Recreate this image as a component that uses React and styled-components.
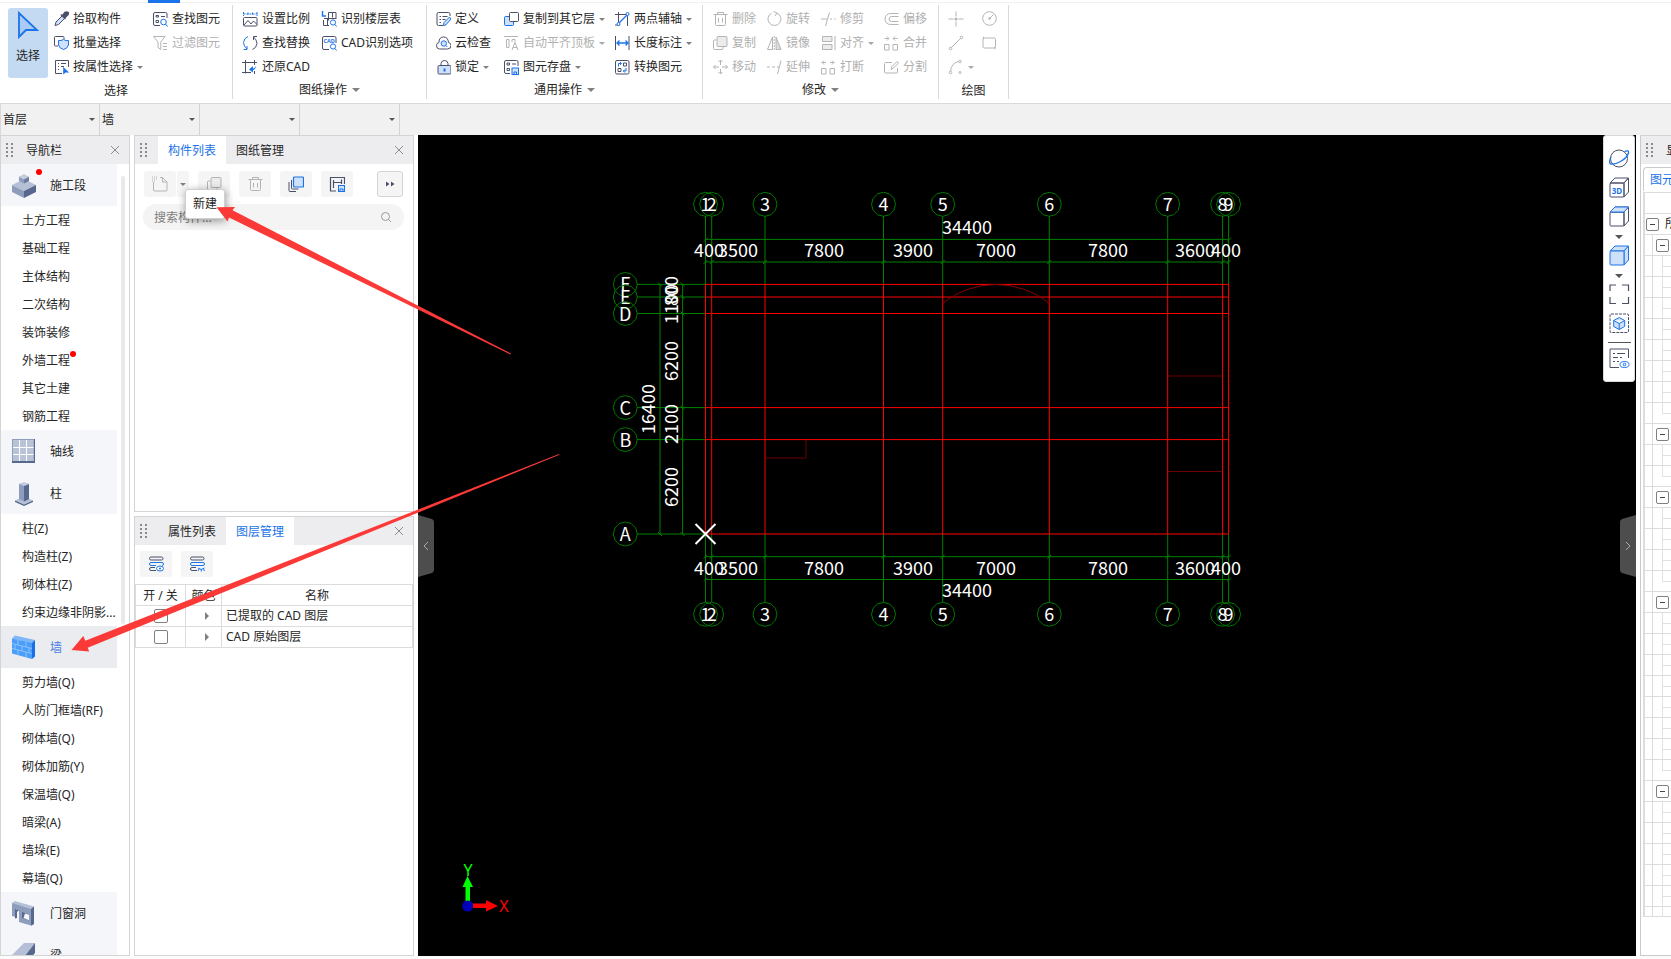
import React from "react";
import styled, { createGlobalStyle, css } from "styled-components";

const ink = "#4a5068";
const blue = "#1a73e8";
const pale = "#cfe1fa";
const grey = "#b4b4b4";

const GlobalStyle = createGlobalStyle`
  * {
    box-sizing: border-box;
  }
  body {
    margin: 0;
    overflow: hidden;
    background: #fbfbfb;
    color: #262626;
    font-family: "Noto Sans", "Noto Sans CJK SC", sans-serif;
    font-size: 12px;
    line-height: 18px;
  }
  button, input, select {
    font: inherit;
    color: inherit;
  }
  svg {
    display: block;
    flex: none;
  }
`;

/* ---------- icons ---------- */

const icons = {
  picker: (
    <>
      <path d="M9 5 3 11l-1 3.5L5.500 13.500 11 8" fill={pale} stroke={ink} />
      <path d="M8 3.500 12.500 8 M9.500 5l2.500-3.500q2-1 3 0 .8 1.500-.5 2.500L11.500 7z" fill={ink} stroke={ink} strokeWidth="1.600" />
    </>
  ),
  batch: (
    <>
      <path d="M5 11H2.500Q1.500 11 1.500 10V2.500Q1.500 1.500 2.500 1.500H10Q11 1.500 11 2.500V4" stroke={ink} />
      <path d="M5.500 5.500q2.500.5 5-1 2.500 1.500 5 1V10q-1 3.500-5 4.500-4-1-5-4.500z" fill={pale} stroke={blue} />
    </>
  ),
  byProp: (
    <>
      <path d="M9 14.500H2.500V1.500h13V8M5 4.500h1M8 4.500h5M5 7.500h1M8 7.500h3M5 10.500h1" stroke={ink} />
      <path d="M10.500 8.500v6.500l2-1.800h3z" fill={blue} stroke={blue} strokeWidth=".6" />
    </>
  ),
  find: (
    <>
      <path d="M8 14.500H3Q1.500 14.500 1.500 13V3Q1.500 1.500 3 1.500H13.500Q15 1.500 15 3V7M4 4.500h2.500v1.500H4zM9 5.500h4M4 9.500h2.500v2H4z" stroke={ink} />
      <circle cx="11.500" cy="11" r="2.800" stroke={blue} />
      <path d="M13.500 13l2 2.500" stroke={blue} />
    </>
  ),
  filter: (
    <path d="M1.500 1.500H13L8.800 7v7.500L6 12.500V7zM11 8.500h4M11 11.500h4M11 14.500h4" stroke={grey} />
  ),
  scale: (
    <>
      <path d="M1.500 1v4M15 1v4M1.500 3h14M6 1.500V4M10.500 1.500V4" stroke={blue} strokeDasharray="2 1" />
      <rect x="1.500" y="6.500" width="13.500" height="8.500" rx="1" stroke={ink} />
      <path d="M2 14l4-4.500 3 3.500 2.500-3L15 13.500" stroke={ink} />
    </>
  ),
  replace: (
    <>
      <path d="M6 1.500Q2 3 1.500 7.500q.3 4 3.500 6.500M5 11v3.500H1.500" stroke={blue} />
      <path d="M10.500 14.500Q14.500 13 15 8.500q-.3-4-3.500-6.500M11.500 5V1.500H15" stroke={ink} />
    </>
  ),
  restore: (
    <>
      <path d="M0 3.500h15M3.500 1v13.500M0 13.500h9M12.500 1v5M12.500 12v3" stroke={ink} />
      <path d="M14 6.500q-1 3-3 3V7L7 10.500l4 3v-2.500q3-.5 3-4.500z" fill={blue} />
    </>
  ),
  floors: (
    <>
      <path d="M1.500 0v5H5" stroke={blue} strokeWidth="1.400" />
      <path d="M7.500 1.500H15V8M7.500 1.500v8M11.500 1.500v5M3 7.500h12M2.500 9v5.500H8M6.500 8v6" stroke={ink} />
      <circle cx="12" cy="11.500" r="2.600" stroke={blue} />
      <path d="M14 13.500l1.500 2" stroke={blue} />
    </>
  ),
  cad: (
    <>
      <path d="M8 14.500H3Q1.500 14.500 1.500 13V3Q1.500 1.500 3 1.500H13.500Q15 1.500 15 3V8" stroke={ink} />
      <text x="8.200" y="7.800" textAnchor="middle" fontSize="5.500" fontWeight="700" fill={blue}>CAD</text>
      <circle cx="12" cy="11.500" r="2.600" stroke={blue} />
      <path d="M14 13.500l1.500 2" stroke={blue} />
    </>
  ),
  define: (
    <>
      <path d="M8 14.500H3.500Q2 14.500 2 13V3Q2 1.500 3.500 1.500H13.500Q15 1.500 15 3V5M4.500 5.500h1.500M7.500 5.500h5M4.500 8.500h1.500M7.500 8.500h3M4.500 11.500h1.500" stroke={ink} />
      <path d="M8.500 14.500l.5-3L14.500 6l1.500 2-5 5.800z" fill={pale} stroke={blue} />
    </>
  ),
  cloud: (
    <>
      <path d="M4.500 14Q1.500 14 1.500 10.500q0-2.500 2.500-3Q4 2 8.500 2t5 5.500q2.500.5 2.500 3 0 3.500-3.500 3.500z" stroke={ink} />
      <circle cx="8.800" cy="8.500" r="2.700" fill={pale} stroke={blue} />
      <path d="M10.800 10.500l1.500 1.500" stroke={blue} />
    </>
  ),
  lock: (
    <>
      <path d="M6 6V4.500q.5-3 3.500-3t3.500 3V6" stroke={ink} />
      <rect x="3" y="6.500" width="13" height="8.500" rx="1.200" fill={pale} stroke={ink} />
      <path d="M9.500 9.500v3" stroke={blue} strokeWidth="2" />
    </>
  ),
  copyFloor: (
    <>
      <path d="M6 5.500H2.500Q1.500 5.500 1.500 6.500V13.500Q1.500 14.500 2.500 14.500H9.500Q10.500 14.500 10.500 13.500V11" fill={pale} stroke={blue} />
      <rect x="6.500" y="1.500" width="9" height="9" rx="1" fill="#fff" stroke={ink} />
    </>
  ),
  alignTop: (
    <>
      <path d="M1 1.500h14M3.500 4.500h2.500v8H3.500zM9 7V4.500h3V7" stroke={grey} />
      <path d="M9 15l3-7.500 3 7.500M10 12.500h4" stroke={grey} />
    </>
  ),
  store: (
    <>
      <path d="M7 14.500H3Q1.500 14.500 1.500 13V3Q1.500 1.500 3 1.500H13.500Q15 1.500 15 3V7M4 4h2.500v2H4zM9 5h4M4 9.500h2.500v2H4z" stroke={ink} />
      <rect x="9" y="9" width="6.500" height="6.500" fill={pale} stroke={blue} />
      <path d="M11 15v-2h2.500v2" stroke={blue} />
    </>
  ),
  twoPoint: (
    <>
      <path d="M1 3.500h13.500M4.500 1v14M13.500 3v12M1 14h5" stroke={ink} />
      <path d="M4 13L14 3" stroke={blue} strokeWidth="1.300" />
      <circle cx="4.500" cy="13" r="1.500" fill="#fff" stroke={blue} />
      <circle cx="13.500" cy="3" r="1.500" fill="#fff" stroke={blue} />
    </>
  ),
  length: (
    <>
      <path d="M1.500 1v14M15 1v14" stroke={ink} />
      <path d="M3 8h11M5.500 5.500L3 8l2.500 2.500M11.500 5.500L14 8l-2.500 2.500" stroke={blue} strokeWidth="1.300" />
    </>
  ),
  convert: (
    <>
      <rect x="1.500" y="1.500" width="13.500" height="13.500" rx="1.500" stroke={ink} />
      <path d="M9.500 4h3v3h-3zM4 9.500h3v3H4z" stroke={ink} />
      <path d="M4.500 7.500V4.500H7M6 3L7.500 4.500 6 6M12 9v3H9.500M10.800 10.500L9.300 12l1.500 1.500" stroke={blue} />
    </>
  ),
  trash: <path d="M1.500 3.500h14M5.500 3V1.500h6V3M3.500 4v9.500q0 1 1 1h8q1 0 1-1V4M6.500 7v4.500M10.500 7v4.500" stroke={grey} />,
  copy: (
    <>
      <path d="M4.500 5H2.500Q1.500 5 1.500 6V13.500Q1.500 14.500 2.500 14.500H10Q11 14.500 11 13.500V12" stroke={grey} />
      <rect x="5" y="1.500" width="10" height="10" rx="1" fill="#ececec" stroke={grey} />
    </>
  ),
  move: <path d="M8.500 1v5M8.500 10v5M1.500 8H7M10 8h5.500M6.500 3l2-2 2 2M6.500 13l2 2 2-2M3.500 6l-2 2 2 2M13.500 6l2 2-2 2" stroke={grey} />,
  rotate: <path d="M5.500 2.200A6.500 6.500 0 1 0 11 2M7.500.5L11 2 9 5" stroke={grey} />,
  mirror: (
    <>
      <path d="M6.500 2v12.500H1.500z" stroke={grey} />
      <path d="M10 2v12.500h5z" fill="#ddd" stroke={grey} />
      <path d="M8.200 1v14" stroke={grey} strokeDasharray="2 1" />
    </>
  ),
  extend: <path d="M1 8h3M6 8h3M11 8h2M15 1.500L11.500 15" stroke={grey} />,
  trim: <path d="M1 8h6M10 8h2M14 8h1.500M9.500 1.500L5.500 15" stroke={grey} />,
  align: (
    <>
      <path d="M15 1v14" stroke={grey} />
      <path d="M2.500 1.500h9.500v5H2.500zM2.500 9.500h9.500v5H2.500z" fill="#ececec" stroke={grey} />
    </>
  ),
  cut: <path d="M1.500 9.500h4.500v5.500H1.500zM10 9.500h4.500v5.500H10zM2 3.500h4M4 1.500l-2 2 2 2M10 3.500h4M12 1.500l2 2-2 2" stroke={grey} />,
  offset: <path d="M15.500 2.500H7.500a5.500 5.500 0 0 0 0 11H15.500M15.500 5.500H8.500a2.500 2.500 0 0 0 0 5H15.500" stroke={grey} />,
  merge: <path d="M1.500 9.500h4.500v5.500H1.500zM10 9.500h4.500v5.500H10zM1.500 3.500h4M4 1.500l2 2-2 2M14.500 3.500h-4M12 1.500l-2 2 2 2" stroke={grey} />,
  split: <path d="M9 3.500H2.500q-1 0-1 1V13q0 1 1 1h11q1 0 1-1V9M8 10.500l1-3L14 2.500l1.500 1.500-5 5z" stroke={grey} />,
  point: (
    <>
      <path d="M8 0.500v5M8 10.500v5M.5 8h5M10.500 8h5" stroke={grey} />
      <circle cx="8" cy="8" r="1.600" fill={grey} />
    </>
  ),
  line: (
    <>
      <path d="M3 13L13 3" stroke={grey} />
      <circle cx="2.500" cy="13.500" r="1.300" stroke={grey} />
      <circle cx="13.500" cy="2.500" r="1.300" stroke={grey} />
    </>
  ),
  arc: (
    <>
      <path d="M2.500 12Q3.500 4 10.500 2.500" stroke={grey} />
      <circle cx="2.500" cy="13.500" r="1.300" stroke={grey} />
      <circle cx="12" cy="2.500" r="1.300" stroke={grey} />
      <circle cx="12" cy="13.500" r="1" stroke={grey} />
    </>
  ),
  circle: (
    <>
      <circle cx="7.500" cy="7.500" r="6.800" stroke={grey} />
      <path d="M7.500 7.500l4-4" stroke={grey} />
      <circle cx="7.500" cy="7.500" r="1.200" fill={grey} />
    </>
  ),
  rect: (
    <>
      <rect x="1" y="3" width="12.500" height="10" rx="1.500" stroke={grey} />
      <path d="M1 3h1M12.500 13h1" stroke={grey} strokeWidth="2.400" />
    </>
  ),
  newDoc: (
    <>
      <path d="M1.500 6v8q0 1 1 1h11.500q1 0 1-1V6L10.500 1.500H8M10.500 1.500V6H15" stroke={grey} />
      <path d="M0 1h6M0 3h6M0 5h4" stroke={grey} strokeDasharray="1 1" />
    </>
  ),
  layers: (
    <>
      <path d="M1 6v8.500q0 1 1 1h6M3.500 4v8q0 1 1 1h6" stroke={ink} />
      <rect x="5.500" y="1" width="10" height="10" rx="1" fill={pale} stroke={blue} strokeWidth="1.200" />
    </>
  ),
  save: (
    <>
      <path d="M7 15H1.500V1.500h14V8M4.500 4v8M4.500 6.500h8M12.500 3.500V8" stroke={ink} strokeWidth="1.200" />
      <rect x="9.500" y="9.500" width="6" height="6" fill={pale} stroke={blue} />
      <path d="M11 15v-2h3v2" stroke={blue} />
    </>
  ),
  layerEye: (
    <>
      <rect x="1.500" y="1" width="13.500" height="3" rx="1.500" stroke={ink} />
      <path d="M14 9.500q1.500 0 1.500-1.500T14 6.500H3q-1.500 0-1.500 1.500T3 9.500h5" stroke={blue} />
      <path d="M8 14.500H3q-1.500 0-1.500-1.500T3 11.500h4" stroke={ink} />
      <ellipse cx="12" cy="12.500" rx="3.500" ry="2.500" fill="#fff" stroke={blue} />
      <circle cx="12" cy="12.500" r="1" fill={blue} />
    </>
  ),
  layerClosed: (
    <>
      <rect x="1.500" y="1" width="13.500" height="3" rx="1.500" stroke={ink} />
      <path d="M14 9.500q1.500 0 1.500-1.500T14 6.500H3q-1.500 0-1.500 1.500T3 9.500h11" stroke={blue} />
      <path d="M8 14.500H3q-1.500 0-1.500-1.500T3 11.500h4" stroke={ink} />
      <path d="M9 12q3 3 6.500 0M10 13l-1 2M12.300 13.500v2M14.500 13l1 2" stroke={blue} />
    </>
  ),
  search: (
    <>
      <circle cx="7.500" cy="7.500" r="4" stroke="#9a9a9a" />
      <path d="M10.500 10.500l2.500 2.500" stroke="#9a9a9a" />
    </>
  ),
  more: <path d="M4 5.500v5L7.500 8zM9 5.500v5L12.500 8z" fill={ink} />,
  close: <path d="M4 4l8 8M12 4l-8 8" stroke="#8c8c8c" />,
};

const Icon = ({ name, size = 16 }) => (
  <svg width={size} height={size} viewBox="0 0 16 16" fill="none" aria-hidden="true">
    {icons[name]}
  </svg>
);

const navIcons = {
  stage: (
    <>
      <path d="M0 12l12-6 12 6-12 6z" fill="#b5c0d6" />
      <path d="M0 12l12 6v7L0 19z" fill="#8f9dbd" />
      <path d="M24 12l-12 6v7l12-6z" fill="#56688e" />
      <path d="M7 4l5-2.500L17 4v4l-5 2.500L7 8z" fill="#8f9dbd" />
      <path d="M7 4l5-2.500L17 4l-5 2.500z" fill="#c3ccde" />
      <path d="M17 4v4l-5 2.500v-4z" fill="#6d7ea3" />
    </>
  ),
  axis: (
    <>
      <path d="M0 0h23v24H0z" fill="#56688e" />
      <path d="M0 0h22v22H0z" fill="#8f9dbd" />
      <path d="M1 1h20.500v21H1z" fill="#b9c3d8" />
      <path d="M7.500 1v21M14.500 1v21M1 8.500h20.500M1 15.500h20.500" stroke="#fff" />
    </>
  ),
  column: (
    <>
      <path d="M3 19.500l9-4 9 4-9 4z" fill="#b5c0d6" />
      <path d="M3 19.500l9 4v1.500l-9-4zM21 19.500l-9 4v1.500l9-4z" fill="#56688e" />
      <path d="M7 3l5-1.500L17 3v15l-5 2.500L7 18z" fill="#8f9dbd" />
      <path d="M12 5l5-2v15l-5 2.500z" fill="#56688e" />
      <path d="M7 3l5-1.500L17 3l-5 2z" fill="#c3ccde" />
    </>
  ),
  wall: (
    <>
      <path d="M0 3.500l3-3L23 5l-3 3.500z" fill="#7db7f8" />
      <path d="M0 3.500L20 8v16L0 18.500z" fill="#4a9df8" />
      <path d="M23 5v16.500L20 24V8z" fill="#1a6fe8" />
      <path d="M0 8.500L20 13.500M0 13.500L20 18.500M6 5v5M14 7v5M3 9.500v5M10 11v5M17 12.500v5M6 15v5M14 17v5" stroke="#8cc3ff" />
    </>
  ),
  door: (
    <>
      <path d="M0 2l3-2 19 5.500v18L19 25z" fill="#b5c0d6" />
      <path d="M0 2l19 6v16.500L7 21V9L4 8v8l-4-1z" fill="#8f9dbd" />
      <path d="M22 5.500V23l-3 1.500V8zM3 8l4 1-2 2v6l-2 .5z" fill="#56688e" />
      <path d="M10 11l7 2.500v6L10 17z" fill="#56688e" />
      <path d="M13 12.500l4 1.200v5.500L11.500 17z" fill="#f5f6f9" />
    </>
  ),
  beam: (
    <>
      <path d="M0 12L12 0h11L12 14z" fill="#b5c0d6" />
      <path d="M23 0v10L12 22v-8z" fill="#56688e" />
      <path d="M0 12l12 2v8H0z" fill="#8f9dbd" />
    </>
  ),
};

const Caret = styled.i`
  flex: none;
  border: solid transparent;
  border-top-color: ${(p) => p.$color || "#808080"};
  border-width: ${(p) => (p.$large ? "4px 4px 0" : "3px 3px 0")};
`;

/* ---------- ribbon ---------- */

const Shell = styled.div`
  position: relative;
  display: flex;
  flex-direction: column;
  height: 100vh;
  padding-bottom: 3px;
`;

const TabStrip = styled.div`
  height: 3px;
  background: #fff;
  border-bottom: 1px solid #f0f0f0;
  padding-left: 148px;
`;

const ActiveMark = styled.div`
  width: 32px;
  height: 3px;
  background: ${blue};
`;

const Ribbon = styled.header`
  display: flex;
  height: 101px;
  padding: 2px 0;
  background: #fff;
  border-bottom: 1px solid #d9d9d9;
`;

const Group = styled.section`
  display: flex;
  flex-direction: column;
  height: 94px;
  border-right: 1px solid #d9d9d9;
`;

const GroupBody = styled.div`
  display: flex;
  flex: none;
  height: 76px;
  padding: 2px 0 0 ${(p) => p.$pad}px;
`;

const GroupLabel = styled.div`
  display: flex;
  justify-content: center;
  align-items: center;
  gap: 5px;
  height: 18px;
  padding-top: ${(p) => (p.$menu ? 0 : 2)}px;
`;

const Column = styled.div`
  width: ${(p) => p.$w}px;
`;

const Tool = styled.button`
  display: flex;
  align-items: center;
  gap: 4px;
  height: 24px;
  padding: 0;
  border: 0;
  background: none;
  white-space: nowrap;
  color: ${(p) => (p.disabled ? "#b0b0b0" : "#262626")};
`;

const SelectTool = styled.button`
  display: flex;
  flex-direction: column;
  align-items: center;
  gap: 8px;
  width: 40px;
  height: 70px;
  margin: 1px 5px 0 0;
  padding: 3px 0 0;
  border: 0;
  border-radius: 3px;
  background: #c4daf2;
`;

const groups = [
  {
    label: "选择",
    pad: 8,
    big: true,
    columns: [
      { w: 99, tools: [["picker", "拾取构件"], ["batch", "批量选择"], ["byProp", "按属性选择", 1]] },
      { w: 80, tools: [["find", "查找图元"], ["filter", "过滤图元", 0, 1]] },
    ],
  },
  {
    label: "图纸操作",
    menu: true,
    pad: 9,
    columns: [
      { w: 79, tools: [["scale", "设置比例"], ["replace", "查找替换"], ["restore", "还原CAD"]] },
      { w: 105, tools: [["floors", "识别楼层表"], ["cad", "CAD识别选项"]] },
    ],
  },
  {
    label: "通用操作",
    menu: true,
    pad: 8,
    columns: [
      { w: 68, tools: [["define", "定义"], ["cloud", "云检查"], ["lock", "锁定", 1]] },
      { w: 111, tools: [["copyFloor", "复制到其它层", 1], ["alignTop", "自动平齐顶板", 1, 1], ["store", "图元存盘", 1]] },
      { w: 88, tools: [["twoPoint", "两点辅轴", 1], ["length", "长度标注", 1], ["convert", "转换图元"]] },
    ],
  },
  {
    label: "修改",
    menu: true,
    pad: 9,
    columns: [
      { w: 54, tools: [["trash", "删除", 0, 1], ["copy", "复制", 0, 1], ["move", "移动", 0, 1]] },
      { w: 54, tools: [["rotate", "旋转", 0, 1], ["mirror", "镜像", 0, 1], ["extend", "延伸", 0, 1]] },
      { w: 63, tools: [["trim", "修剪", 0, 1], ["align", "对齐", 1, 1], ["cut", "打断", 0, 1]] },
      { w: 55, tools: [["offset", "偏移", 0, 1], ["merge", "合并", 0, 1], ["split", "分割", 0, 1]] },
    ],
  },
  {
    label: "绘图",
    pad: 9,
    columns: [
      { w: 34, tools: [["point", "", 0, 1], ["line", "", 0, 1], ["arc", "", 1, 1]] },
      { w: 26, tools: [["circle", "", 0, 1], ["rect", "", 0, 1]] },
    ],
  },
];

const RibbonBar = () => (
  <Ribbon>
    {groups.map((g) => (
      <Group key={g.label}>
        <GroupBody $pad={g.pad}>
          {g.big && (
            <SelectTool>
              <svg width="22" height="28" viewBox="0 0 22 28" fill="none">
                <path d="M2 2v24l7-7h11z" fill="#a9cbf5" stroke={blue} strokeWidth="1.800" />
              </svg>
              选择
            </SelectTool>
          )}
          {g.columns.map((col, i) => (
            <Column key={i} $w={col.w}>
              {col.tools.map(([icon, text, menu, off]) => (
                <Tool key={icon} disabled={!!off} aria-label={text || icon}>
                  <Icon name={icon} />
                  {text}
                  {menu ? <Caret $color={off ? "#a8a8a8" : undefined} /> : null}
                </Tool>
              ))}
            </Column>
          ))}
        </GroupBody>
        <GroupLabel $menu={g.menu}>
          {g.label}
          {g.menu && <Caret $large />}
        </GroupLabel>
      </Group>
    ))}
  </Ribbon>
);

/* ---------- filter bar ---------- */

const FilterBar = styled.div`
  display: flex;
  height: 31px;
  background: #f1f1f1;
  border-left: 1px solid #d9d9d9;
`;

const FilterCell = styled.label`
  display: flex;
  align-items: center;
  width: 100px;
  padding-right: 4px;
  border-right: 1px solid #d4d4d4;

  &:first-child {
    width: 99px;
  }
`;

const FilterSelect = styled.select`
  flex: 1;
  min-width: 0;
  height: 30px;
  padding: 0 0 0 2px;
  border: 0;
  appearance: none;
  background: none;
  outline: none;
`;

/* ---------- panels ---------- */

const Main = styled.main`
  display: flex;
  flex: 1;
  min-height: 0;
  background: #fff;
`;

const frame = css`
  background: #fff;
  border: 1px solid #d4d4d6;
`;

const NavPanel = styled.nav`
  ${frame}
  display: flex;
  flex-direction: column;
  width: 130px;
`;

const Middle = styled.div`
  display: flex;
  flex-direction: column;
  gap: 4px;
  width: 280px;
  margin: 0 4px;
`;

const Panel = styled.section`
  ${frame}
  display: flex;
  flex-direction: column;
  flex: ${(p) => p.$grow};
  min-height: 0;
`;

const PanelHead = styled.div`
  display: flex;
  flex: none;
  align-items: center;
  height: 28px;
  padding: 0 6px 0 5px;
  background: #ededf0;
`;

const Grip = styled.span`
  flex: none;
  width: 7px;
  height: 15px;
  margin-right: ${(p) => p.$gap}px;
  background: radial-gradient(circle at 1px 1px, #8a8a8a 1px, transparent 1px) 0 0 / 5px 4px;
`;

const Title = styled.span`
  flex: 1;
  padding-top: 2px;
  white-space: nowrap;
`;

const PanelTab = styled.button`
  height: 28px;
  padding: 2px 10px 0;
  border: 0;
  white-space: nowrap;
  background: ${(p) => (p.$active ? "#fff" : "transparent")};
  color: ${(p) => (p.$active ? blue : "#262626")};
`;

const CloseButton = styled.button`
  margin-left: auto;
  padding: 0;
  border: 0;
  background: none;
`;

const NavScroll = styled.div`
  display: flex;
  flex: 1;
  min-height: 0;
  overflow: hidden;
`;

const NavList = styled.ul`
  width: 116px;
  margin: 0;
  padding: 0;
  list-style: none;
`;

const NavTrack = styled.div`
  width: 4px;
  height: 448px;
  margin: 12px 0 0 4px;
  border-radius: 2px;
  background: #e9e9eb;
`;

const NavGroup = styled.a`
  display: flex;
  align-items: center;
  gap: 14px;
  height: 42px;
  padding: 2px 0 0 11px;
  text-decoration: none;
  background: ${(p) => (p.$active ? "#ebecf0" : "#f5f6f9")};
  color: ${(p) => (p.$active ? "#4a7de0" : "#262626")};
`;

const NavItem = styled.a`
  display: flex;
  align-items: center;
  height: 28px;
  padding: 2px 0 0 21px;
  white-space: nowrap;
  text-decoration: none;
  color: #262626;
`;

const Marked = styled.span`
  position: relative;
`;

const RedDot = styled.i`
  position: absolute;
  top: ${(p) => p.$top}px;
  right: -6px;
  width: 6px;
  height: 6px;
  border-radius: 50%;
  background: #f00;
`;

const ToolRow = styled.div`
  position: relative;
  display: flex;
  gap: 9px;
  padding: ${(p) => p.$pad};
`;

const SquareButton = styled.button`
  display: flex;
  align-items: center;
  justify-content: center;
  width: ${(p) => p.$w || 32}px;
  height: 26px;
  padding: 0;
  border: ${(p) => (p.$outlined ? "1px solid #d4d4d4" : "0")};
  border-radius: 3px;
  background: #f5f5f5;
`;

const SplitPair = styled.div`
  display: flex;
  gap: 1px;
`;

const Spacer = styled.span`
  flex: 1;
`;

const Tooltip = styled.div`
  position: absolute;
  top: 25px;
  left: 50px;
  z-index: 2;
  padding: 5px 7px;
  height: 30px;
  border: 1px solid #d0d0d0;
  border-radius: 3px;
  background: #fff;
  box-shadow: 1px 2px 8px rgba(0, 0, 0, 0.4);
`;

const SearchBox = styled.label`
  display: flex;
  align-items: center;
  height: 26px;
  margin: 0 9px 0 8px;
  padding: 0 10px 0 11px;
  border-radius: 13px;
  background: #f4f4f4;

  input {
    flex: 1;
    min-width: 0;
    padding: 2px 0 0;
    border: 0;
    outline: none;
    background: none;
  }
  input::placeholder {
    color: #7d7d7d;
  }
`;

const LayerTable = styled.table`
  width: 100%;
  table-layout: fixed;
  border-collapse: collapse;

  th,
  td {
    height: 21px;
    padding: 0;
    border: 1px solid #dcdcdc;
    font-weight: 400;
    line-height: 18px;
  }
  th {
    padding-top: 2px;
  }
  th:first-child {
    width: 50px;
  }
  th:nth-child(2) {
    width: 36px;
  }
  td:first-child input {
    display: block;
    margin: 0 auto;
  }
  td:last-child {
    padding-left: 4px;
  }
`;

const Check = styled.input`
  width: 14px;
  height: 14px;
  appearance: none;
  border: 1px solid #808080;
  border-radius: 2px;
  background: #fff;
`;

const Expand = styled.button`
  display: block;
  width: 0;
  height: 0;
  margin: 0 auto 0 19px;
  padding: 0;
  border: solid transparent;
  border-left-color: #808080;
  border-width: 4px 0 4px 4px;
  background: none;
`;

const nav = [
  { icon: "stage", label: "施工段", dot: true, items: ["土方工程", "基础工程", "主体结构", "二次结构", "装饰装修", "外墙工程", "其它土建", "钢筋工程"] },
  { icon: "axis", label: "轴线", items: [] },
  { icon: "column", label: "柱", items: ["柱(Z)", "构造柱(Z)", "砌体柱(Z)", "约束边缘非阴影..."] },
  { icon: "wall", label: "墙", active: true, items: ["剪力墙(Q)", "人防门框墙(RF)", "砌体墙(Q)", "砌体加筋(Y)", "保温墙(Q)", "暗梁(A)", "墙垛(E)", "幕墙(Q)"] },
  { icon: "door", label: "门窗洞", items: [] },
  { icon: "beam", label: "梁", items: [] },
];

const Navigation = () => (
  <NavPanel>
    <PanelHead>
      <Grip $gap={13} />
      <Title>导航栏</Title>
      <CloseButton aria-label="close">
        <Icon name="close" />
      </CloseButton>
    </PanelHead>
    <NavScroll>
      <NavList>
        {nav.map((g) => (
          <li key={g.label}>
            <NavGroup href="#" $active={g.active}>
              <Marked>
                <svg width="24" height="26" viewBox="0 0 24 26">
                  {navIcons[g.icon]}
                </svg>
                {g.dot && <RedDot $top={-4} />}
              </Marked>
              {g.label}
            </NavGroup>
            {g.items.map((item) => (
              <NavItem href="#" key={item}>
                <Marked>
                  {item}
                  {item === "外墙工程" && <RedDot $top={-1} />}
                </Marked>
              </NavItem>
            ))}
          </li>
        ))}
      </NavList>
      <NavTrack />
    </NavScroll>
  </NavPanel>
);

const ComponentPanel = () => (
  <Panel $grow="0 0 377px">
    <PanelHead>
      <Grip $gap={11} />
      <PanelTab $active>构件列表</PanelTab>
      <PanelTab>图纸管理</PanelTab>
      <CloseButton aria-label="close">
        <Icon name="close" />
      </CloseButton>
    </PanelHead>
    <ToolRow $pad="7px 10px 7px 9px">
      <SplitPair>
        <SquareButton aria-label="new"><Icon name="newDoc" /></SquareButton>
        <SquareButton $w={12} aria-label="new menu"><Caret /></SquareButton>
      </SplitPair>
      <SquareButton aria-label="copy"><Icon name="copy" /></SquareButton>
      <SquareButton aria-label="delete"><Icon name="trash" /></SquareButton>
      <SquareButton aria-label="layers"><Icon name="layers" /></SquareButton>
      <SquareButton aria-label="save"><Icon name="save" /></SquareButton>
      <Spacer />
      <SquareButton $w={26} $outlined aria-label="more"><Icon name="more" /></SquareButton>
      <Tooltip role="tooltip">新建</Tooltip>
    </ToolRow>
    <SearchBox>
      <input type="text" aria-label="search" placeholder="搜索构件..." />
      <Icon name="search" />
    </SearchBox>
  </Panel>
);

const LayerPanel = () => (
  <Panel $grow="1">
    <PanelHead>
      <Grip $gap={11} />
      <PanelTab>属性列表</PanelTab>
      <PanelTab $active>图层管理</PanelTab>
      <CloseButton aria-label="close">
        <Icon name="close" />
      </CloseButton>
    </PanelHead>
    <ToolRow $pad="6px 6px 7px 5px">
      <SquareButton aria-label="show layer"><Icon name="layerEye" /></SquareButton>
      <SquareButton aria-label="hide layer"><Icon name="layerClosed" /></SquareButton>
    </ToolRow>
    <LayerTable>
      <thead>
        <tr>
          <th>开 / 关</th>
          <th>颜色</th>
          <th>名称</th>
        </tr>
      </thead>
      <tbody>
        {["已提取的 CAD 图层", "CAD 原始图层"].map((name) => (
          <tr key={name}>
            <td><Check type="checkbox" aria-label={name} /></td>
            <td><Expand aria-label="expand" /></td>
            <td>{name}</td>
          </tr>
        ))}
      </tbody>
    </LayerTable>
  </Panel>
);

/* ---------- drawing ---------- */

const Canvas = styled.section`
  position: relative;
  flex: 1;
  min-width: 0;
  overflow: hidden;
  background: #000;
`;

const Drawing = styled.svg`
  width: 100%;
  height: 100%;
  font-family: "Noto Sans CJK SC", sans-serif;
  font-size: 18px;
`;

const AxisName = styled.text`
  font-family: "Noto Sans", sans-serif;
  font-size: 16px;
  text-anchor: middle;
`;

const LEFT = 288;
const RIGHT = 811;
const TOP = 149;
const BOTTOM = 399;

const cols = [
  [287.5, "1"], [293.7, "2"], [347, "3"], [465.5, "4"], [524.7, "5"],
  [631.3, "6"], [749.7, "7"], [804.6, "8"], [810.6, "9"],
];
const rows = [[149.4, "F"], [162, "E"], [178.5, "D"], [272.6, "C"], [304.6, "B"], [399, "A"]];
const spans = [[291, 400], [320, 3500], [406, 7800], [495, 3900], [578, 7000], [690, 7800], [777, 3600], [808, 400]];
const heights = [[156, 800], [169, 1100], [226, 6200], [289, 2100], [352, 6200]];

const Bubble = ({ x, y, children }) => {
  const pts = Array.from({ length: 12 }, (_, i) => {
    const a = (i * Math.PI) / 6;
    return `${x + 12 * Math.cos(a)},${y + 12 * Math.sin(a)}`;
  });
  return (
    <>
      <polygon points={pts.join(" ")} fill="none" stroke="#007800" />
      <text x={x} y={y + 7} fill="#fff" textAnchor="middle">{children}</text>
    </>
  );
};

const AxisGrid = () => (
  <Drawing>
    <g stroke="#008000" fill="none">
      {cols.map(([x]) => (
        <path key={x} d={`M${x} 81V${TOP}M${x} ${BOTTOM}V467M${x - 2} 129l4-4M${x - 2} 423.700l4-4`} />
      ))}
      {rows.map(([y]) => (
        <path key={y} d={`M219 ${y}H${LEFT}M262.500 ${y - 2}l4 4`} />
      ))}
      <path d={`M${LEFT} 104.400H${RIGHT}M${LEFT} 127H${RIGHT}M${LEFT} 421.700H${RIGHT}M${LEFT} 444.500H${RIGHT}`} />
      <path d={`M242 ${TOP}V${BOTTOM}M264.600 ${TOP}V${BOTTOM}`} />
      <path d="M286 106.500l4-4M809 106.500l4-4M286 446.500l4-4M809 446.500l4-4M240 147.500l4 4M240 397l4 4" />
    </g>
    <g stroke="#f00" fill="none">
      {cols.map(([x]) => (
        <path key={x} d={`M${x} ${TOP}V${BOTTOM}`} />
      ))}
      {rows.map(([y]) => (
        <path key={y} d={`M${LEFT} ${y}H${RIGHT}`} />
      ))}
    </g>
    <g stroke="#8a0000" fill="none">
      <path d="M524.700 168.500A84.300 84.300 0 0 1 631.300 168.500" />
      <path d="M750 241H804.600M750 336.500H804.600M347 323H388V305" opacity=".8" />
    </g>
    {cols.map(([x, n]) => (
      <g key={n}>
        <Bubble x={x} y={69.300}>{n}</Bubble>
        <Bubble x={x} y={479.300}>{n}</Bubble>
      </g>
    ))}
    {rows.map(([y, n]) => (
      <Bubble key={n} x={207.300} y={y}>{n}</Bubble>
    ))}
    <g fill="#fff" textAnchor="middle">
      {spans.map(([x, n]) => (
        <g key={x}>
          <text x={x} y="122">{n}</text>
          <text x={x} y="440">{n}</text>
        </g>
      ))}
      <text x="549" y="99">34400</text>
      <text x="549" y="462">34400</text>
      {heights.map(([y, n]) => (
        <text key={y} transform={`translate(260 ${y}) rotate(-90)`}>{n}</text>
      ))}
      <text transform="translate(237 274) rotate(-90)">16400</text>
    </g>
    <path d="M277.500 389l20 20M297.500 389l-20 20" stroke="#fff" strokeWidth="2" />
    <path d="M47.500 768V752h-3l5-11 5.500 11h-3v16z" fill="#0f0" />
    <path d="M54 768.500h14v-3.500l12 6-12 5.500v-3.500H54z" fill="#f00" />
    <circle cx="49.700" cy="771" r="5.500" fill="#0000b8" />
    <AxisName x="50" y="741" fill="#0f0">Y</AxisName>
    <AxisName x="86" y="777" fill="#f00">X</AxisName>
  </Drawing>
);

const Handle = styled.button`
  position: absolute;
  top: 380px;
  ${(p) => (p.$right ? "right: 0;" : "left: 0;")}
  width: 16px;
  height: 62px;
  padding: 0;
  border: 0;
  background: none;
`;

const Palette = styled.div`
  position: absolute;
  top: 0;
  right: 1px;
  display: flex;
  flex-direction: column;
  align-items: center;
  width: 32px;
  padding: 12px 0 4px;
  border: 1px solid #d9d9d9;
  border-radius: 3px;
  background: #fff;
`;

const PaletteButton = styled.button`
  display: flex;
  flex-direction: column;
  align-items: center;
  gap: 8px;
  height: ${(p) => (p.$menu ? 39 : 29)}px;
  padding: 0;
  border: 0;
  background: none;
`;

const Rule = styled.hr`
  width: 23px;
  margin: 0 0 5px;
  border: 0;
  border-top: 1px solid #555;
`;

const Cube = ({ stroke = ink, top = "none", face = "none", children }) => (
  <>
    <path d="M1 6L6 1h13.500L15 6z" fill={top} stroke={stroke} />
    <path d="M15 6l4.500-5V15L15 20z" fill={face} stroke={stroke} />
    <rect x="1" y="6" width="14" height="14" rx="1" fill={face} stroke={stroke} />
    {children}
  </>
);

const paletteIcons = [
  {
    name: "orbit",
    art: (
      <>
        <circle cx="10" cy="10.500" r="8.500" stroke={ink} />
        <path d="M15.500 3.500Q20 1.500 19.500 5q-1.500 5-8 8.500T1.500 16Q-.5 14 2 9" stroke={blue} strokeWidth="1.300" />
      </>
    ),
  },
  {
    name: "3D",
    art: (
      <Cube>
        <text x="8" y="16.500" textAnchor="middle" fontSize="8" fontWeight="700" fill={blue}>3D</text>
      </Cube>
    ),
  },
  {
    name: "top view",
    menu: true,
    art: (
      <>
        <Cube />
        <path d="M1 6L6 1h13.500L15 6z" fill={pale} stroke={blue} />
      </>
    ),
  },
  { name: "solid", menu: true, art: <Cube stroke={blue} top={pale} face={pale} /> },
  { name: "fit", art: <path d="M1 7V1h6M13 1h6.500v6M19.500 13v6.500H13M7 19.500H1V13" stroke={ink} strokeWidth="1.200" /> },
  {
    name: "isolate",
    art: (
      <>
        <rect x="1" y="1" width="18.500" height="18.500" rx="1" stroke={ink} strokeDasharray="3 1" />
        <path d="M10.200 4.500l5.500 3v6l-5.500 3-5.500-3v-6zM4.700 7.500l5.500 3 5.500-3M10.200 10.500v6" fill={pale} stroke={blue} />
      </>
    ),
  },
];

/* ---------- right panel ---------- */

const SidePanel = styled.aside`
  width: 31px;
  margin-left: 4px;
  border-left: 1px solid #c9c9d0;
  border-bottom: 1px solid #c9c9d0;
  border-top: 1px solid #d4d4d6;
  overflow: hidden;
  background: #fff;
`;

const SideTabs = styled.div`
  display: flex;
  padding: 3px 0 0 2px;
`;

const SideTab = styled.button`
  flex: none;
  height: 24px;
  padding: 0 7px 0 6px;
  border: 1px solid #c9c9d0;
  border-bottom: 0;
  border-radius: 4px 0 0 0;
  background: #fff;
  color: ${blue};
`;

const Tree = styled.ul`
  height: 725px;
  margin: 1px 0 0 2px;
  padding: 20px 0 0;
  border-top: 1px solid #dcdcdc;
  border-left: 2px solid #dcdcdc;
  border-bottom: 1px solid #dcdcdc;
  list-style: none;
  overflow: hidden;
`;

const TreeRow = styled.li`
  display: flex;
  align-items: center;
  height: 21px;
  border-top: 1px solid #dcdcdc;
  white-space: nowrap;
`;

const Guide = styled.span`
  flex: none;
  align-self: stretch;
  width: 10px;
  background: linear-gradient(#dcdcdc, #dcdcdc) 7px 0 / 1px 100% no-repeat;
`;

const Branch = styled.span`
  flex: none;
  align-self: stretch;
  width: 20px;
  background:
    linear-gradient(#e2e2e2, #e2e2e2) 7px 0 / 1px ${(p) => (p.$last ? "50%" : "100%")} no-repeat,
    linear-gradient(#e2e2e2, #e2e2e2) 7px 10px / 13px 1px no-repeat;
`;

const Toggle = styled.button`
  flex: none;
  width: 13px;
  height: 13px;
  margin: 0 6px 0 1px;
  padding: 0 3px;
  border: 1px solid #808080;
  border-radius: 2px;
  background: #fff;

  &::before {
    content: "";
    display: block;
    height: 1px;
    background: #444;
  }
`;

const leaves = [8, 2, 4, 8, 6];

const DisplayPanel = () => (
  <SidePanel>
    <PanelHead>
      <Grip $gap={13} />
      <Title>显</Title>
    </PanelHead>
    <SideTabs>
      <SideTab>图元</SideTab>
    </SideTabs>
    <Tree>
      <TreeRow>
        <Toggle aria-label="collapse" />所
      </TreeRow>
      {leaves.map((count, i) => (
        <React.Fragment key={i}>
          <TreeRow>
            <Guide />
            <Toggle aria-label="collapse" />
          </TreeRow>
          {Array.from({ length: count }, (_, n) => (
            <TreeRow key={n}>
              <Guide />
              <Branch $last={n === count - 1} />
            </TreeRow>
          ))}
        </React.Fragment>
      ))}
    </Tree>
  </SidePanel>
);

/* arrows drawn over the whole window */
const Annotations = styled.svg`
  position: absolute;
  top: 0;
  left: 0;
  width: 100%;
  height: 100%;
  z-index: 5;
  pointer-events: none;
`;

const App = () => {
  return (
    <>
      <GlobalStyle />
      <Shell>
        <TabStrip>
          <ActiveMark />
        </TabStrip>
        <RibbonBar />
        <FilterBar>
          {["首层", "墙", "", ""].map((value, i) => (
            <FilterCell key={i}>
              <FilterSelect aria-label={`filter ${i + 1}`} defaultValue={value}>
                <option>{value}</option>
              </FilterSelect>
              <Caret $color="#555" />
            </FilterCell>
          ))}
        </FilterBar>
        <Main>
          <Navigation />
          <Middle>
            <ComponentPanel />
            <LayerPanel />
          </Middle>
          <Canvas>
            <AxisGrid />
            <Handle aria-label="collapse left">
              <svg width="16" height="62" fill="none">
                <path d="M0 0l14 4q2 1 2 3v48q0 2-2 3L0 62z" fill="#4d4d4d" />
                <path d="M10 27l-4 4 4 4" stroke="#aaa" />
              </svg>
            </Handle>
            <Handle $right aria-label="collapse right">
              <svg width="16" height="62" fill="none">
                <path d="M16 0L2 4Q0 5 0 7v48q0 2 2 3l14 4z" fill="#4d4d4d" />
                <path d="M6 27l4 4-4 4" stroke="#aaa" />
              </svg>
            </Handle>
            <Palette>
              {paletteIcons.map((p) => (
                <PaletteButton key={p.name} $menu={p.menu} aria-label={p.name}>
                  <svg width="21" height="21" fill="none">{p.art}</svg>
                  {p.menu && <Caret $large $color="#555" />}
                </PaletteButton>
              ))}
              <Rule />
              <PaletteButton aria-label="display list">
                <svg width="21" height="21" fill="none">
                  <path d="M10 19.500H1V1h18.500v9M4 5.500h2M8 5.500h8M4 9.500h5M11 9.500h2M4 13.500h2M8 13.500h2" stroke={ink} />
                  <ellipse cx="15.500" cy="16.500" rx="4.500" ry="3" fill="#fff" stroke={blue} />
                  <circle cx="15.500" cy="16.500" r="1.300" stroke={blue} />
                </svg>
              </PaletteButton>
            </Palette>
          </Canvas>
          <DisplayPanel />
        </Main>
        <Annotations fill="#fb3a38">
          <path d="M216.500 207.300L235 207l-2.500 3.200L511 353.500l-.5 1L229 217.500l-1.500 4z" />
          <path d="M71.500 650L83.300 636l2 4.700L559 454l.5.8L87.700 647.700l1.500 3.800z" />
        </Annotations>
      </Shell>
    </>
  );
};

export default App;
